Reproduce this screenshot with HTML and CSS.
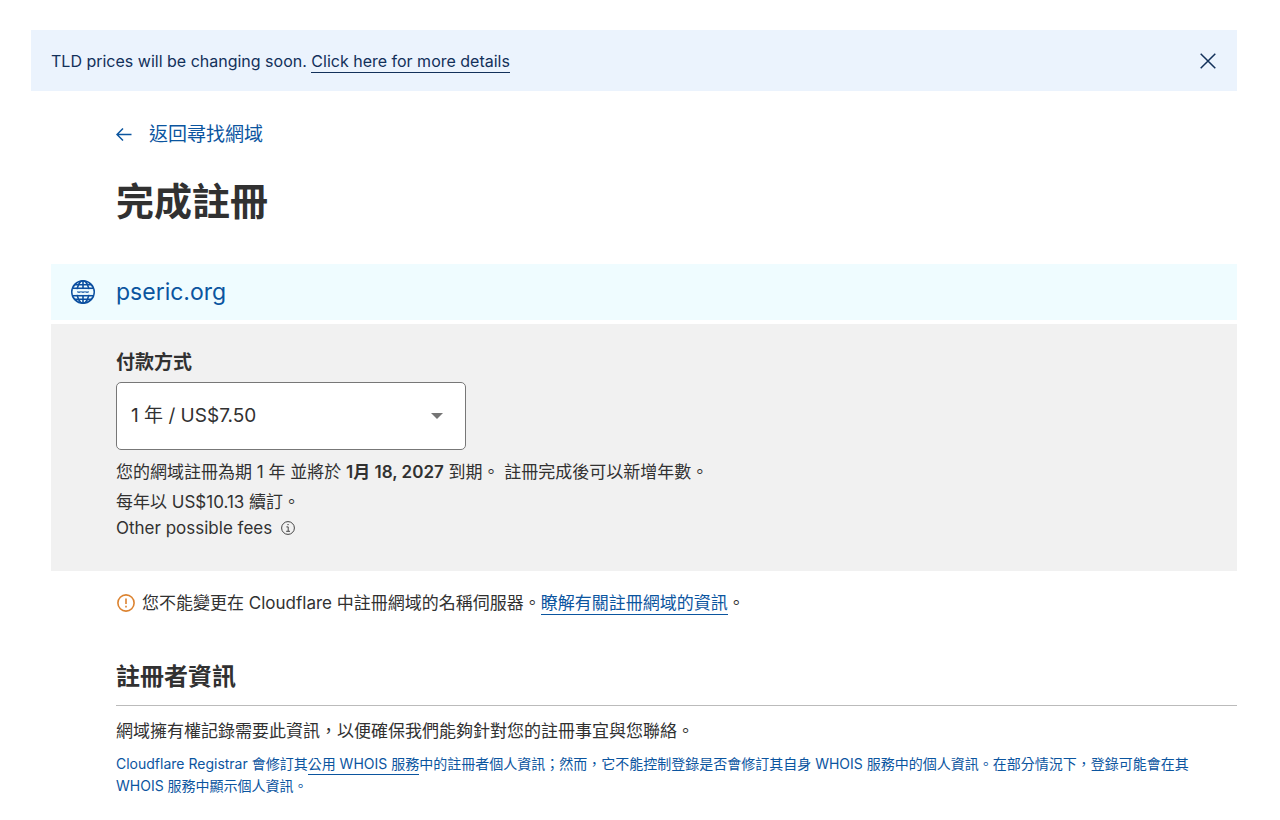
FILE: index.html
```html
<!DOCTYPE html>
<html lang="zh-Hant">
<head>
  <meta charset="UTF-8"/>
  <meta name="viewport" content="width=device-width,initial-scale=1"/>
  <title>完成註冊</title>
  <link rel="stylesheet" href="styles.css">
</head>
<body>

  <div class="banner">
    <p>TLD prices will be changing soon. <a href="#">Click here for more details</a></p>
    <button type="button" class="close" aria-label="Close">
      <svg width="16" height="16" viewBox="0 0 16 16"><path d="M.7.7l14.6 14.6M15.3.7L.7 15.3"/></svg>
    </button>
  </div>

  <main>
    <div class="intro">
      <a href="#" class="back">
        <svg width="16" height="14" viewBox="0 0 16 14"><path d="M15.5 6.5H1M7 .5l-6 6 6 6"/></svg>
        返回尋找網域
      </a>
      <h1>完成註冊</h1>
    </div>

    <!-- Domain -->
    <div class="domain">
      <svg width="26" height="26" viewBox="0 0 26 26">
        <circle cx="13" cy="13" r="11.2"/>
        <ellipse cx="13" cy="13" rx="6" ry="11.2"/>
        <path d="M13 2v7M13 17v7M4.5 5.8h17M4.5 20.2h17M2 9.4h22M2 16.6h22"/>
        <path class="mask" d="M2.8 10.2h20.4v5.6H2.8z"/>
        <path class="www" d="M7.4 12.3l.8 1.6.8-1.6.8 1.6.8-1.6M11.4 12.3l.8 1.6.8-1.6.8 1.6.8-1.6M15.4 12.3l.8 1.6.8-1.6.8 1.6.8-1.6"/>
      </svg>
      <span>pseric.org</span>
    </div>

    <!-- Payment -->
    <div class="payment">
      <label for="term">付款方式</label>
      <div class="select-wrap">
        <select id="term">
          <option>1 年 / US$7.50</option>
        </select>
        <svg width="12" height="6" viewBox="0 0 12 6"><path d="M0 0h12L6 6z"/></svg>
      </div>
      <p class="expires">您的網域註冊為期 1 年 並將於 <strong>1月 18, 2027</strong> 到期。 註冊完成後可以新增年數。</p>
      <p class="renew">每年以 US$10.13 續訂。</p>
      <p class="fees">Other possible fees
        <svg width="14" height="14" viewBox="0 0 14 14"><circle cx="7" cy="7" r="6.4"/><path d="M5.4 5.9h1.8v4.3M5.2 10.3h3.8M6.4 3.6h1.3"/></svg>
      </p>
    </div>

    <div class="notice">
      <svg width="18" height="18" viewBox="0 0 18 18"><circle cx="9" cy="9" r="8.1"/><path d="M9 4.5v5.6M9 11.8v1.7"/></svg>
      <p>您不能變更在 Cloudflare 中註冊網域的名稱伺服器。<a href="#">瞭解有關註冊網域的資訊</a>。</p>
    </div>

    <!-- Registrant -->
    <section class="registrant">
      <h2>註冊者資訊</h2>
      <p>網域擁有權記錄需要此資訊，以便確保我們能夠針對您的註冊事宜與您聯絡。</p>
      <p class="whois">Cloudflare Registrar 會修訂其<a href="#">公用 WHOIS 服務</a>中的註冊者個人資訊；然而，它不能控制登錄是否會修訂其自身 WHOIS 服務中的個人資訊。在部分情況下，登錄可能會在其 WHOIS 服務中顯示個人資訊。</p>
    </section>
  </main>

</body>
</html>
```

FILE: styles.css
```css
*{box-sizing:border-box}
body{margin:0;padding:30px 43px 24px 31px;background:#fff;color:#313131;
     font-family:Inter,"Noto Sans CJK TC",sans-serif;font-size:17px;line-height:26px}
p,h1,h2{margin:0}
svg{fill:none;flex-shrink:0}
a{color:#0b559f;text-decoration:none}

.banner{display:flex;align-items:center;justify-content:space-between;min-height:61px;
        padding:0 20px;background:#ebf3fd;color:#12305a;font-size:16px}
.banner a{display:inline-block;color:inherit;line-height:22px;border-bottom:1px solid #12305a}
.close{display:flex;padding:0;border:0;background:none;cursor:pointer}
.close svg{margin:0 1px;stroke:#12305a;stroke-width:1.5}

main{padding-left:20px}
.intro{padding:29px 0 37px 65px}
.back{display:inline-flex;align-items:center;gap:17px;font-size:19px;line-height:30px}
.back svg{stroke:#0b559f;stroke-width:1.5}
h1{margin-top:25px;font-size:38px;line-height:52px}

.domain{display:flex;align-items:center;gap:20px;min-height:56px;padding-left:19px;
        background:#effcff;color:#0b559f;font-size:23px}
.domain svg{stroke:#0b4fa0;stroke-width:1.6}
.domain .mask{fill:#effcff;stroke:none}
.domain .www{stroke-width:.8}

.payment{margin-top:4px;padding:24px 65px 30px;background:#f1f1f1}
.payment label{display:block;font-size:19px;line-height:30px;font-weight:600}
.select-wrap{display:grid;align-items:center;width:350px;max-width:100%;margin:4px 0 9px}
.select-wrap select{grid-area:1/1;width:100%;height:68px;padding:0 14px;border:1px solid #777;
                    border-radius:5px;background:#fff;color:#313131;font:inherit;font-size:19px;
                    appearance:none}
.select-wrap svg{grid-area:1/1;justify-self:end;margin-right:23px;fill:#757575;pointer-events:none}
.expires{margin-bottom:4px}
strong{font-weight:600}
.fees{display:flex;align-items:center;gap:9px}
.fees svg{stroke:#444;stroke-width:1}

.notice{display:flex;align-items:center;gap:7px;padding:19px 0 0 66px}
.notice svg{stroke:#dc8330;stroke-width:1.6}
.notice a{display:inline-block;line-height:22px;border-bottom:1px solid #0b559f}

.registrant{margin:43px 0 0 65px}
h2{margin-bottom:12px;padding-bottom:10px;border-bottom:1px solid #bbb;font-size:24px;line-height:36px}
.whois{margin-top:9px;padding-right:20px;color:#0b559f;font-size:14px;line-height:22px}
.whois a{display:inline-block;line-height:20px;border-bottom:1px solid #0b559f}
```
